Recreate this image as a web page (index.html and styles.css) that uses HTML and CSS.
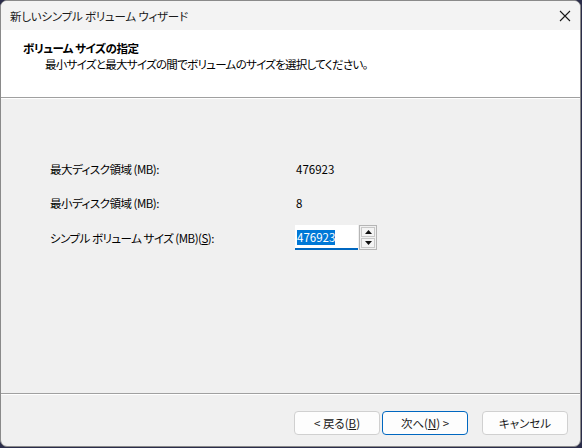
FILE: index.html
```html
<!DOCTYPE html>
<html lang="ja">
<head>
<meta charset="utf-8">
<title>新しいシンプル ボリューム ウィザード</title>
<link rel="stylesheet" href="styles.css">
</head>
<body>
<div class="window">
  <div class="titlebar">
    <span class="title">新しいシンプル ボリューム ウィザード</span>
    <span class="close">
      <svg width="12" height="12" viewBox="0 0 12 12"><path d="M1 1 L11 11 M11 1 L1 11" stroke="#1a1a1a" stroke-width="1.1" fill="none"/></svg>
    </span>
  </div>
  <div class="header">
    <div class="h-title">ボリューム サイズの指定</div>
    <div class="h-sub">最小サイズと最大サイズの間でボリュームのサイズを選択してください。</div>
  </div>
  <div class="content">
    <div class="row">
      <span class="label">最大ディスク領域 (MB):</span>
      <span class="value">476923</span>
    </div>
    <div class="row">
      <span class="label">最小ディスク領域 (MB):</span>
      <span class="value">8</span>
    </div>
    <div class="row row-input">
      <span class="label">シンプル ボリューム サイズ (MB)(<u>S</u>):</span>
      <div class="spin">
        <div class="field"><span class="sel">476923</span></div>
        <div class="spinbtns">
          <div class="sbtn"><svg width="7" height="4" viewBox="0 0 7 4"><path d="M3.5 0 L7 4 L0 4 Z" fill="#111"/></svg></div>
          <div class="sbtn"><svg width="7" height="4" viewBox="0 0 7 4"><path d="M0 0 L7 0 L3.5 4 Z" fill="#111"/></svg></div>
        </div>
      </div>
    </div>
  </div>
  <div class="footer">
    <button class="btn">&lt; 戻る(<u>B</u>)</button>
    <button class="btn btn-default">次へ(<u>N</u>) &gt;</button>
    <button class="btn btn-cancel">キャンセル</button>
  </div>
</div>
</body>
</html>
```

FILE: styles.css
```css
html, body {
  margin: 0;
  padding: 0;
}
body {
  width: 582px;
  height: 448px;
  background: #2b2d4a;
  font-family: "Noto Sans CJK JP", "Noto Sans", sans-serif;
  font-size: 11.5px;
  letter-spacing: -0.5px;
  font-feature-settings: "palt";
  color: #000;
  overflow: hidden;
}
.window {
  box-sizing: border-box;
  width: 581px;
  height: 447px;
  border: 1px solid #8a8a8a;
  border-radius: 7px;
  background: #f0f0f0;
  overflow: hidden;
  display: flex;
  flex-direction: column;
}
.titlebar {
  height: 29px;
  flex: none;
  background: #f3f3f3;
  display: flex;
  align-items: center;
  justify-content: space-between;
  padding: 0 9px 0 9px;
}
.title {
  line-height: 14px;
  letter-spacing: -0.2px;
  color: #1a1a1a;
}
.close {
  display: flex;
  align-items: center;
}
.header {
  height: 68px;
  flex: none;
  background: #fff;
  border-bottom: 1px solid #a0a0a0;
  box-shadow: 0 1px 0 #fff;
  padding: 10px 0 0 22px;
  box-sizing: border-box;
}
.h-title {
  font-weight: bold;
  line-height: 16px;
}
.h-sub {
  padding-left: 22px;
  line-height: 16px;
  letter-spacing: -0.7px;
}
.content {
  flex: 1;
  padding: 63px 0 0 49px;
  display: flex;
  flex-direction: column;
  gap: 18px;
}
.row {
  display: flex;
  align-items: center;
  height: 16px;
}
.row-input {
  height: 25px;
  margin-top: -4px;
}
.label {
  width: 246px;
  line-height: 16px;
}
.value {
  line-height: 16px;
  letter-spacing: 0;
}
.spin {
  display: flex;
  align-items: stretch;
  height: 25px;
  margin-left: -1px;
}
.field {
  width: 63px;
  box-sizing: border-box;
  border-bottom: 2px solid #0067c0;
  background: #fff;
  padding: 4px 0 0 2px;
}
.sel {
  background: #0078d7;
  color: #fff;
  line-height: 15px;
  letter-spacing: 0;
  display: inline-block;
}
.spinbtns {
  width: 18px;
  box-sizing: border-box;
  border: 1px solid #b5b5b5;
  margin-left: 1px;
  padding: 1px;
  display: flex;
  flex-direction: column;
  gap: 1px;
}
.sbtn {
  flex: 1;
  background: #f4f4f4;
  border: 1px solid #c8c8c8;
  display: flex;
  align-items: center;
  justify-content: center;
}
.footer {
  height: 53px;
  flex: none;
  border-top: 1px solid #a0a0a0;
  box-shadow: inset 0 1px 0 #fff;
  display: flex;
  align-items: flex-start;
  padding: 17px 0 0 293px;
  box-sizing: border-box;
}
.btn {
  width: 86px;
  height: 24px;
  box-sizing: border-box;
  border: 1px solid #d0d0d0;
  border-radius: 4px;
  background: #fdfdfd;
  font-family: "Noto Sans CJK JP", "Noto Sans", sans-serif;
  font-size: 11.5px;
  font-feature-settings: "palt";
  color: #1a1a1a;
  padding: 0;
  line-height: 20px;
}
.btn-default {
  margin-left: 2px;
  border: 1px solid #0067c0;
}
.btn-cancel {
  margin-left: 14px;
}
```
